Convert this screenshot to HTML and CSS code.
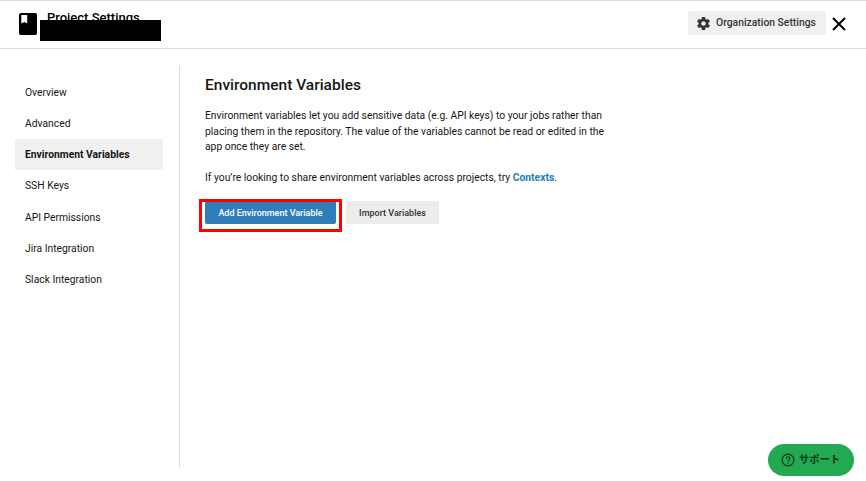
FILE: index.html
```html
<!DOCTYPE html>
<html lang="en">
<head>
<meta charset="utf-8">
<title>Project Settings</title>
<link rel="stylesheet" href="styles.css">
</head>
<body>
<header class="header">
  <svg class="book" viewBox="0 0 18 22"><rect width="18" height="22" rx="2"/><path class="bookmark" d="M2.3 2H8.2V10.4L5.25 9.1L2.3 10.4Z"/></svg>
  <div class="project">
    <h1 class="project-title">Project Settings</h1>
    <div class="redaction"></div>
  </div>
  <button class="org-button">
    <svg class="gear" viewBox="2 2 20 20"><path d="M19.43 12.98c.04-.32.07-.64.07-.98s-.03-.66-.07-.98l2.11-1.65c.19-.15.24-.42.12-.64l-2-3.46c-.12-.22-.39-.3-.61-.22l-2.49 1c-.52-.4-1.08-.73-1.69-.98l-.38-2.65C14.46 2.18 14.25 2 14 2h-4c-.25 0-.46.18-.49.42l-.38 2.65c-.61.25-1.17.59-1.69.98l-2.49-1c-.23-.09-.49 0-.61.22l-2 3.46c-.13.22-.07.49.12.64l2.11 1.65c-.04.32-.07.65-.07.98s.03.66.07.98l-2.11 1.65c-.19.15-.24.42-.12.64l2 3.46c.12.22.39.3.61.22l2.49-1c.52.4 1.08.73 1.69.98l.38 2.65c.03.24.24.42.49.42h4c.25 0 .46-.18.49-.42l.38-2.65c.61-.25 1.17-.59 1.69-.98l2.49 1c.23.09.49 0 .61-.22l2-3.46c.12-.22.07-.49-.12-.64l-2.11-1.65zM12 15.5c-1.93 0-3.5-1.57-3.5-3.5s1.57-3.5 3.5-3.5 3.5 1.57 3.5 3.5-1.57 3.5-3.5 3.5z"/></svg>
    <span>Organization Settings</span>
  </button>
  <svg class="close" viewBox="0 0 14 14"><path d="M1 1L13 13M13 1L1 13"/></svg>
</header>
<div class="layout">
  <nav class="nav">
    <a class="nav-item">Overview</a>
    <a class="nav-item">Advanced</a>
    <a class="nav-item active">Environment Variables</a>
    <a class="nav-item">SSH Keys</a>
    <a class="nav-item">API Permissions</a>
    <a class="nav-item">Jira Integration</a>
    <a class="nav-item">Slack Integration</a>
  </nav>
  <main class="content">
    <h2 class="heading">Environment Variables</h2>
    <p class="text">Environment variables let you add sensitive data (e.g. API keys) to your jobs rather than<br>placing them in the repository. The value of the variables cannot be read or edited in the<br>app once they are set.</p>
    <p class="text">If you’re looking to share environment variables across projects, try <a class="link">Contexts</a>.</p>
    <div class="actions">
      <div class="primary-wrap"><button class="button primary">Add Environment Variable</button><div class="highlight"></div></div>
      <button class="button secondary">Import Variables</button>
    </div>
  </main>
</div>
<button class="support">
  <svg class="help" viewBox="0 0 14 14"><circle cx="7" cy="7" r="5.9"/><path d="M5.2 5.7C5.2 3.2 8.8 3.2 8.8 5.5C8.8 6.9 7 6.8 7 8.3M7 9.3V10.5"/></svg>
  <span>サポート</span>
</button>
</body>
</html>
```
FILE: styles.css
```css
* { box-sizing: border-box; }
body {
  margin: 0;
  height: 481px;
  overflow: hidden;
  background: #fff;
  color: #161616;
  font-family: Roboto, "Noto Sans CJK JP", sans-serif;
  font-size: 10.32px;
}
button { border: 0; margin: 0; padding: 0; font-family: inherit; color: inherit; }
svg { display: block; flex: none; }

.header {
  display: flex;
  align-items: flex-start;
  height: 49px;
  padding: 0 20px 0 19px;
  border-top: 1px solid #dcdcdf;
  border-bottom: 1px solid #d9d9d9;
}
.book { width: 18px; height: 22px; margin-top: 12px; }
.bookmark { fill: #fff; }
.project { width: 121px; height: 40px; margin-left: 3px; position: relative; }
.project-title {
  margin: 9px 0 0 7px;
  font-size: 13px;
  line-height: 16px;
  font-weight: 500;
  color: #000;
  white-space: nowrap;
}
.redaction { position: absolute; left: 0; top: 19px; width: 121px; height: 21px; background: #000; }
.org-button {
  display: flex;
  align-items: center;
  gap: 6px;
  width: 138px;
  height: 24px;
  margin: 10px 6px 0 auto;
  padding-left: 9px;
  border-radius: 2px;
  background: #f0f0f0;
  color: #343434;
  font-size: 10.35px;
  font-weight: 500;
  line-height: 16px;
  white-space: nowrap;
}
.gear { width: 13px; height: 13px; fill: #343434; }
.close { width: 14px; height: 14px; margin-top: 16px; fill: none; stroke: #000; stroke-width: 2; }

.layout { display: flex; }
.nav {
  width: 180px;
  height: 401px;
  margin-top: 17px;
  padding: 11px 16px 0 15px;
  border-right: 1px solid #dcdcdc;
}
.nav-item { display: block; height: 31.16px; padding-left: 10px; line-height: 31.16px; }
.active { background: #f0f0f0; font-weight: 700; }

.content { padding: 26px 0 0 25px; }
.heading { margin: 0 0 13px; font-size: 15.5px; line-height: 20px; font-weight: 500; }
.text { margin: 0 0 15.5px; line-height: 15.5px; white-space: nowrap; }
.link { color: #247dbd; font-weight: 700; }
.actions { display: flex; gap: 10px; }
.button { display: block; height: 23px; border-radius: 2px; font-size: 9px; font-weight: 500; text-align: center; white-space: nowrap; }
.primary-wrap { position: relative; }
.primary { width: 131px; background: #2f7db9; color: #fff; }
.secondary { width: 93px; background: #ececec; color: #343434; }
.highlight { position: absolute; left: -6px; top: -2px; width: 143px; height: 33px; border: 3px solid #f00; }

.support {
  position: absolute;
  right: 12px;
  bottom: 5.5px;
  width: 86px;
  height: 32px;
  display: flex;
  align-items: center;
  padding-left: 13px;
  gap: 4px;
  border-radius: 16px;
  background: #23a951;
  color: #0a3518;
  font-size: 10.3px;
  font-weight: 700;
  line-height: 16px;
  white-space: nowrap;
}
.help { width: 14px; height: 14px; fill: none; stroke: #0a3518; stroke-width: 1.1; }
```
